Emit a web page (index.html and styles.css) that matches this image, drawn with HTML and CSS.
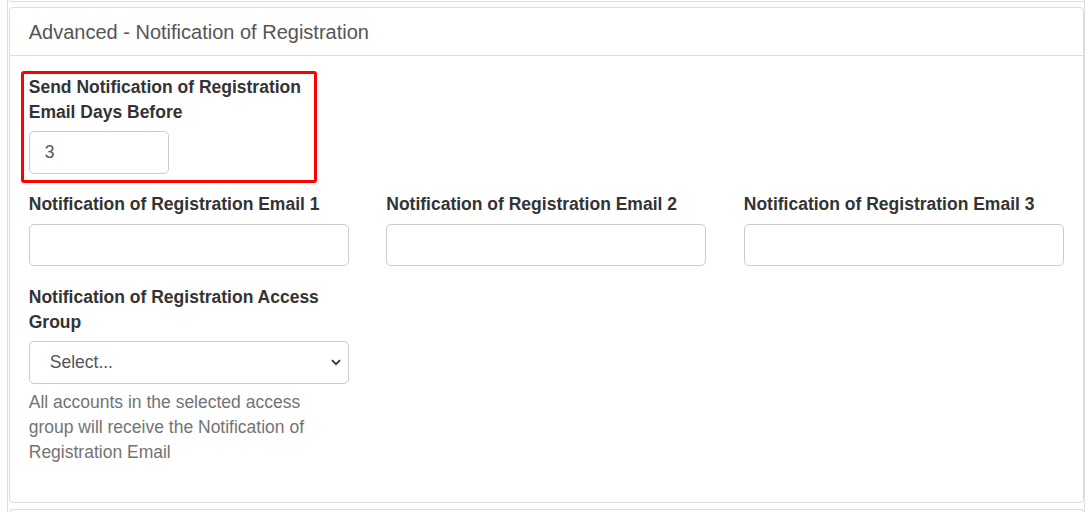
FILE: index.html
```html
<!DOCTYPE html>
<html lang="en">
<head>
<meta charset="utf-8">
<title>Advanced - Notification of Registration</title>
<link rel="stylesheet" href="styles.css">
</head>
<body>
<div class="wrap">
  <div class="panel-prev"></div>
  <section class="panel">
    <div class="panel-heading">
      <h3 class="panel-title">Advanced - Notification of Registration</h3>
    </div>
    <div class="panel-body">
      <div class="row">
        <div class="col">
          <div class="form-group highlighted">
            <span class="highlight"></span>
            <label class="label">Send Notification of Registration Email Days Before</label>
            <div class="input input-small">3</div>
          </div>
        </div>
      </div>
      <div class="row">
        <div class="col">
          <div class="form-group">
            <label class="label">Notification of Registration Email 1</label>
            <div class="input"></div>
          </div>
        </div>
        <div class="col">
          <div class="form-group">
            <label class="label">Notification of Registration Email 2</label>
            <div class="input"></div>
          </div>
        </div>
        <div class="col">
          <div class="form-group">
            <label class="label">Notification of Registration Email 3</label>
            <div class="input"></div>
          </div>
        </div>
      </div>
      <div class="row">
        <div class="col">
          <div class="form-group">
            <label class="label">Notification of Registration Access Group</label>
            <div class="input select">
              <span class="select-text">Select...</span>
              <svg class="chevron" width="10" height="7" viewBox="0 0 10 7"><path d="M1 1.2 L5 5.2 L9 1.2" fill="none" stroke="#333" stroke-width="1.8"/></svg>
            </div>
            <p class="help">All accounts in the selected access group will receive the Notification of Registration Email</p>
          </div>
        </div>
      </div>
    </div>
  </section>
  <div class="panel-next"></div>
</div>
</body>
</html>
```
FILE: styles.css
```css
* { box-sizing: border-box; }
html, body { margin: 0; padding: 0; background: #fff; }
body {
  font-family: "Liberation Sans", Arial, Helvetica, sans-serif;
  font-size: 17.5px;
  line-height: 25px;
  color: #333;
  height: 512px;
  overflow: hidden;
}
.wrap {
  margin-left: 7px;
  width: 1078px;
  height: 512px;
  border-left: 1px solid #ddd;
  border-right: 1px solid #ddd;
  padding-left: 1px;
  display: flex;
  flex-direction: column;
}
.panel-prev {
  height: 2px;
  width: 1075px;
  border: 1px solid #ddd;
  border-top: none;
  border-radius: 0 0 4px 4px;
  flex: none;
}
.panel {
  margin-top: 5px;
  width: 1075px;
  border: 1px solid #ddd;
  border-radius: 4px;
  flex: none;
}
.panel-next {
  margin-top: 6px;
  width: 1075px;
  height: 10px;
  border: 1px solid #ddd;
  border-bottom: none;
  border-radius: 4px 4px 0 0;
  flex: none;
}
.panel-heading {
  padding: 12.5px 18.75px;
  border-bottom: 1px solid #ddd;
}
.panel-title {
  margin: 0;
  font-size: 20px;
  font-weight: 400;
  line-height: 22px;
  color: #555;
}
.panel-body {
  padding: 18.75px 18.75px 18.75px;
}
.row {
  display: grid;
  grid-template-columns: repeat(3, 320px);
  column-gap: 37.5px;
}
.form-group {
  margin-bottom: 18.75px;
  position: relative;
}
.label {
  display: block;
  font-weight: 700;
  margin-bottom: 6.25px;
  color: #333;
}
.input {
  display: flex;
  align-items: center;
  height: 42.5px;
  width: 100%;
  padding: 0 15px;
  border: 1px solid #ccc;
  border-radius: 5px;
  color: #555;
  background: #fff;
}
.input-small { width: 140px; }
.select {
  justify-content: space-between;
  padding-left: 20px;
  padding-right: 7px;
}
.chevron { display: block; }
.help {
  margin: 6.25px 0 0;
  color: #737373;
  width: 300px;
}
.highlight {
  position: absolute;
  left: -8px;
  top: -4px;
  width: 296px;
  height: 112px;
  border: 3px solid #ff0000;
  border-radius: 3px;
  pointer-events: none;
}
```
